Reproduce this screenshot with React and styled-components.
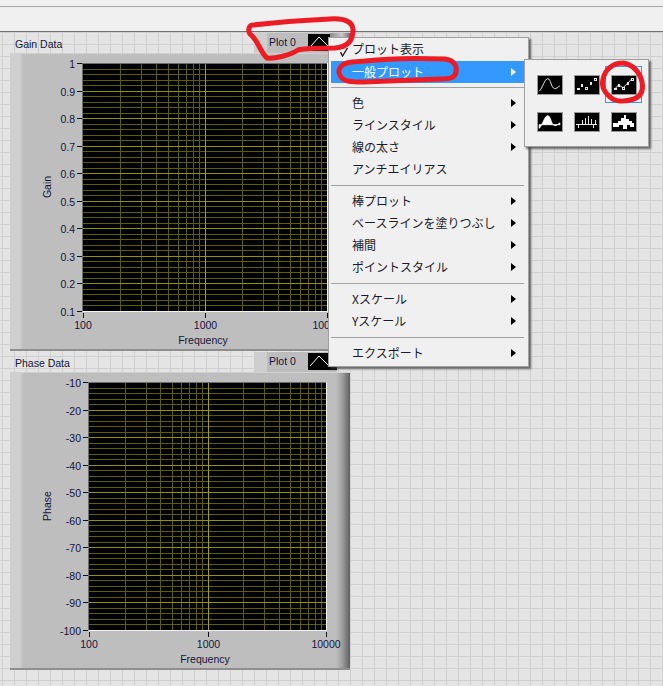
import React from "react";
import styled, { createGlobalStyle } from "styled-components";

const Global = createGlobalStyle`
  html, body { margin: 0; padding: 0; background: #e4e4e4; }
  body { width: 663px; height: 686px; overflow: hidden; font-family: "Liberation Sans", Arial, sans-serif; }
`;

const Root = styled.div`
  position: relative;
  width: 663px;
  height: 686px;
  overflow: hidden;
  display: flex;
  flex-direction: column;
`;

const Toolbar = styled.div`
  height: 32px;
  box-sizing: border-box;
  flex: none;
  background: #f0f0f0;
  border-bottom: 1px solid #6f6f6f;
  background-image: linear-gradient(#f0f0f0 0 6px, #a8a8a8 6px 7px, #f0f0f0 7px);
`;

const Canvas = styled.div`
  flex: 1;
  padding-left: 10px;
  background-color: #e4e4e4;
  background-image:
    linear-gradient(#d0d0d0 1px, transparent 1px),
    linear-gradient(90deg, #d0d0d0 1px, transparent 1px);
  background-size: 12px 12px;
  background-position: 2px 0;
`;

const GraphBlock = styled.section`
  width: 340px;
`;

const GraphHeader = styled.header`
  height: 21px;
  display: flex;
  align-items: flex-end;
  justify-content: space-between;
`;

const Caption = styled.span`
  font-size: 10.5px;
  line-height: 14px;
  margin: 0 0 2px 5px;
  color: #14143c;
`;

const Legend = styled.div`
  width: 96px;
  height: 20px;
  box-sizing: border-box;
  display: flex;
  align-items: flex-start;
  padding: 1px 0 0 15px;
  background: linear-gradient(90deg, #cecece 0 13px, #bdbdbd 13px 83px, transparent 83px);
  position: relative;
`;

const LegendName = styled.span`
  width: 39px;
  font-size: 10.5px;
  line-height: 17px;
  color: #14143c;
`;

const LegendSwatch = styled.svg`
  width: 29px;
  height: 17px;
  display: block;
  background: #000;
`;

const LegendEdge = styled.div`
  position: absolute;
  right: 0;
  top: 0;
  width: 20px;
  height: 4px;
  background: linear-gradient(90deg, #8d8d8d, #c8c8c8 60%, #6c6c6c);
`;

const Panel = styled.div`
  width: 340px;
  height: 298px;
  box-sizing: border-box;
  border-bottom: 2px solid #8e8e8e;
  border-top: 1px solid #d0d0d0;
  background: linear-gradient(90deg, #cfcfcf 0 10px, #bebebe 13px 326px, #a0a0a0 332px, #5f5f5f 340px);
`;

const ChartSvg = styled.svg`
  display: block;
  width: 340px;
  height: 295px;
  margin-top: -1px;
`;

const TickText = styled.text`
  font-family: "Liberation Sans", Arial, sans-serif;
  font-size: 10.5px;
  fill: #14143c;
`;

const Menu = styled.nav`
  position: absolute;
  left: 328px;
  top: 37px;
  width: 201px;
  height: 330px;
  box-sizing: border-box;
  padding: 0 4px 0 2px;
  background: #f0f0f0;
  border: 1px solid #a0a0a0;
  box-shadow: 2px 2px 2px rgba(60, 60, 60, 0.75);
  font-family: "Noto Sans CJK JP", "Liberation Sans", sans-serif;
`;

const Item = styled.div`
  position: relative;
  height: 22px;
  padding-left: 21px;
  display: flex;
  align-items: center;
  justify-content: space-between;
  font-size: 12px;
  color: ${(p) => (p.$active ? "#ffffff" : "#1a1a2a")};
  background: ${(p) => (p.$active ? "#3399ff" : "transparent")};
  margin-top: ${(p) => (p.$active ? "1px" : "0")};
`;

const ItemLabel = styled.span`
  margin-bottom: 2px;
`;

const Arrow = styled.i`
  display: block;
  width: 0;
  height: 0;
  margin-right: 8px;
  border-style: solid;
  border-width: 4.5px 0 4.5px 5px;
  border-color: transparent transparent transparent ${(p) => (p.$active ? "#fff" : "#000")};
`;

const Check = styled.svg`
  position: absolute;
  left: 8px;
  top: 9px;
  width: 10px;
  height: 10px;
`;

const Separator = styled.hr`
  height: 1px;
  border: 0;
  padding: 0;
  background: #a0a0a0;
  margin: ${(p) => (p.$tight ? "4px" : "5px")} 0 4px;
`;

const Submenu = styled.div`
  position: absolute;
  left: 524px;
  top: 59px;
  box-sizing: border-box;
  width: 125px;
  height: 88px;
  padding: 6px;
  display: grid;
  grid-template-columns: repeat(3, 37px);
  grid-auto-rows: 37px;
  background: #f0f0f0;
  border: 1px solid #a0a0a0;
  box-shadow: 2px 2px 2px rgba(60, 60, 60, 0.75);
`;

const IconCell = styled.div`
  display: flex;
  align-items: center;
  justify-content: center;
  box-sizing: border-box;
  border: 1px solid ${(p) => (p.$selected ? "#3399ff" : "transparent")};
`;

const PlotIcon = styled.svg`
  width: 26px;
  height: 20px;
  display: block;
  background: #000;
  border: 1px solid #9a9a9a;
  box-sizing: border-box;
`;

const Annotations = styled.svg`
  position: absolute;
  left: 0;
  top: 0;
  width: 663px;
  height: 686px;
  pointer-events: none;
`;

const MINOR = "#5e5e00";
const MAJOR = "#929200";
const logs = [2, 3, 4, 5, 6, 7, 8, 9].map((n) => Math.log10(n));

function Chart({ left, right, top, bottom, yLabels, yTitle, xLabels, xTitleX }) {
  const w = right - left;
  const h = bottom - top;
  const xs = [];
  [0, 0.5].forEach((s) => logs.forEach((l) => xs.push(Math.round(left + (s + l / 2) * w) + 0.5)));
  const mid = Math.round(left + w / 2) + 0.5;
  const n = yLabels.length - 1;
  const minorY = [];
  for (let i = 0; i < n; i++)
    for (let j = 1; j < 5; j++) minorY.push(Math.round(top + ((i + j / 5) * h) / n) + 0.5);
  const majorY = yLabels.map((_, i) => Math.round(top + (i * h) / n) + 0.5);
  const tx = [left, mid, right];
  return (
    <ChartSvg viewBox="0 0 340 295" shapeRendering="crispEdges">
      <rect x={left} y={top} width={w} height={h} fill="#000" />
      {minorY.map((y) => <line key={y} x1={left} x2={right} y1={y} y2={y} stroke={MINOR} />)}
      {xs.map((x) => <line key={x} x1={x} x2={x} y1={top} y2={bottom} stroke={MINOR} />)}
      {majorY.slice(1, -1).map((y) => <line key={y} x1={left} x2={right} y1={y} y2={y} stroke={MAJOR} />)}
      <line x1={mid} x2={mid} y1={top} y2={bottom} stroke="#a3a300" />
      <line x1={left} x2={right} y1={top + 0.5} y2={top + 0.5} stroke="#6e6e6e" />
      <line x1={left - 0.5} x2={left - 0.5} y1={top} y2={bottom} stroke="#6e6e6e" />
      <line x1={left} x2={right} y1={bottom + 0.5} y2={bottom + 0.5} stroke="#f2f2f2" />
      <line x1={right + 0.5} x2={right + 0.5} y1={top} y2={bottom + 1} stroke="#f2f2f2" />
      {majorY.map((y) => <line key={y} x1={left - 6} x2={left - 1} y1={y} y2={y} stroke="#111" />)}
      {tx.map((x) => <line key={x} x1={x} x2={x} y1={bottom + 2} y2={bottom + 7} stroke="#111" />)}
      <g shapeRendering="auto">
        {yLabels.map((t, i) => (
          <TickText key={t} x={left - 8} y={majorY[i] + 4} textAnchor="end">{t}</TickText>
        ))}
        {xLabels.map((t, i) => (
          <TickText key={t} x={tx[i]} y={276} textAnchor="middle">{t}</TickText>
        ))}
        <TickText x={xTitleX} y={291} textAnchor="middle">Frequency</TickText>
        <TickText transform={`translate(41 ${top + h / 2}) rotate(-90)`} textAnchor="middle">{yTitle}</TickText>
      </g>
    </ChartSvg>
  );
}

function Graph({ caption, ...chart }) {
  return (
    <GraphBlock>
      <GraphHeader>
        <Caption>{caption}</Caption>
        <Legend>
          <LegendName>Plot 0</LegendName>
          <LegendSwatch viewBox="0 0 29 17">
            <path d="M2 13 L11 3 L21 13" fill="none" stroke="#fff" strokeWidth="1" />
          </LegendSwatch>
          <LegendEdge />
        </Legend>
      </GraphHeader>
      <Panel>
        <Chart {...chart} />
      </Panel>
    </GraphBlock>
  );
}

const pts = [[3, 14], [7, 10], [12, 13], [17, 8], [22, 3]];
const Squares = () => (
  <g fill="#000" stroke="#fff" strokeWidth="1" shapeRendering="crispEdges">
    {pts.map(([x, y]) => <rect key={x} x={x - 0.5} y={y - 0.5} width="2" height="2" />)}
  </g>
);

const icons = [
  <path key="a" d="M1 17 C5 13 7 3 10.500 3 C14 3 14 13 18 14 C20 14.500 22 12 24 11" fill="none" stroke="#fff" />,
  <Squares key="b" />,
  <g key="c">
    <path d="M3 14 L7 10 L12 13 L17 8 L22 3" fill="none" stroke="#fff" />
    <Squares />
  </g>,
  <path key="d" d="M1 17 C5 13 7 3 10.500 3 C14 3 14 13 18 14 C20 14.500 22 12 24 11 V13 H1 Z" fill="#fff" stroke="#fff" />,
  <path key="e" d="M1 12.500 H24 M3.500 12.500 V17 M7.500 12.500 V8 M11.500 12.500 V5 M14.500 12.500 V3 M18.500 12.500 V7 M20.500 12.500 V17 M22.500 12.500 V8" fill="none" stroke="#fff" shapeRendering="crispEdges" />,
  <path key="f" d="M1 11 H6 V9 H10 V5 H13 V2 H15 V7 H19 V9 H22 V11 H24 V16 H20 V13 H16 V18 H12 V13 H7 V16 H1 Z" fill="#fff" shapeRendering="crispEdges" />,
];

const Row = ({ children, arrow = true, active, check }) => (
  <Item $active={active}>
    {check && (
      <Check viewBox="0 0 10 10">
        <path d="M1.500 5 L3.500 9 L8.500 1" fill="none" stroke="#111" strokeWidth="1.300" />
      </Check>
    )}
    <ItemLabel>{children}</ItemLabel>
    {arrow && <Arrow $active={active} />}
  </Item>
);

const gainLabels = ["1", "0.9", "0.8", "0.7", "0.6", "0.5", "0.4", "0.3", "0.2", "0.1"];
const phaseLabels = ["-10", "-20", "-30", "-40", "-50", "-60", "-70", "-80", "-90", "-100"];

export default function App() {
  return (
    <Root>
      <Global />
      <Toolbar />
      <Canvas>
        <Graph
          caption="Gain Data"
          left={73}
          right={317}
          top={10}
          bottom={258}
          yLabels={gainLabels}
          yTitle="Gain"
          xLabels={["100", "1000", "10000"]}
          xTitleX={193}
        />
        <Graph
          caption="Phase Data"
          left={79}
          right={316}
          top={10}
          bottom={258}
          yLabels={phaseLabels}
          yTitle="Phase"
          xLabels={["100", "1000", "10000"]}
          xTitleX={195}
        />
      </Canvas>

      <Menu>
        <Row arrow={false} check>プロット表示</Row>
        <Row active>一般プロット</Row>
        <Separator $tight />
        <Row>色</Row>
        <Row>ラインスタイル</Row>
        <Row>線の太さ</Row>
        <Row arrow={false}>アンチエイリアス</Row>
        <Separator />
        <Row>棒プロット</Row>
        <Row>ベースラインを塗りつぶし</Row>
        <Row>補間</Row>
        <Row>ポイントスタイル</Row>
        <Separator />
        <Row>Xスケール</Row>
        <Row>Yスケール</Row>
        <Separator />
        <Row>エクスポート</Row>
      </Menu>

      <Submenu>
        {icons.map((icon, i) => (
          <IconCell key={i} $selected={i === 2}>
            <PlotIcon viewBox="0 0 26 20">{icon}</PlotIcon>
          </IconCell>
        ))}
      </Submenu>

      <Annotations viewBox="0 0 663 686" fill="none" stroke="#ed1c24" strokeWidth="5" strokeLinecap="round" strokeLinejoin="round">
        <path d="M253 25 C270 23 290 21 330 19 C345 18 353 22 353 30 C353 40 348 47 335 48 C320 48 305 48 298 50 C290 55 275 59 267 58 C260 52 258 40 250 34 C247 29 250 25 253 25" />
        <path d="M340 68 C343 62 350 62 365 61 C390 58 420 58 445 59 C454 60 457 66 456 72 C455 78 450 79 440 79 C410 80 385 81 363 82 C350 82 343 81 341 77 C338 73 338 71 340 68" />
        <path d="M623 63 C632 64 640 72 642 82 C644 92 640 98 630 100 C622 102 614 101 610 97 C604 92 601 86 603 79 C605 70 612 63 623 63" />
      </Annotations>
    </Root>
  );
}
